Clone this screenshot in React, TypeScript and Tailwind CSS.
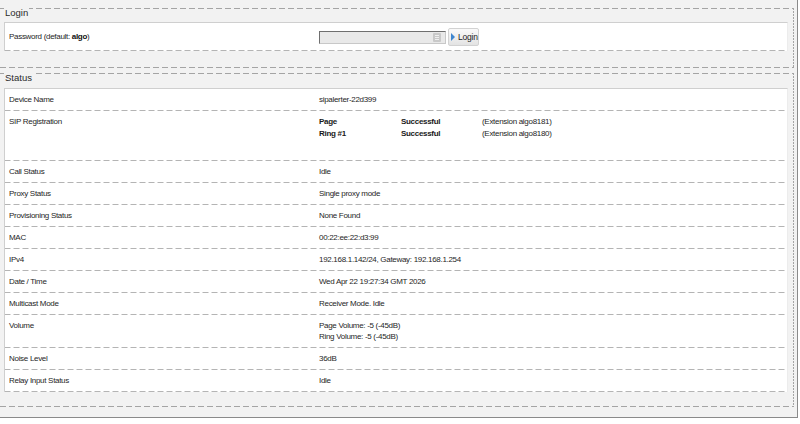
import React from 'react';

type Row = { label: string; value: React.ReactNode };

const font = "font-['Liberation_Sans',Arial,sans-serif]";

// dashed rule drawn as a repeating gradient (6px dash, 3px gap)
const rowRule =
  'bg-[linear-gradient(to_right,#b4b4b4_6px,transparent_6px)] bg-[length:9px_1px] bg-repeat-x bg-bottom';

// top, bottom and right dashed edges of a group box
const groupEdges =
  '[background:linear-gradient(to_right,#a4a4a4_6px,transparent_6px)_0_0/9px_1px_repeat-x,linear-gradient(to_right,#a4a4a4_6px,transparent_6px)_0_100%/9px_1px_repeat-x,linear-gradient(to_bottom,#a4a4a4_2px,transparent_2px)_100%_0/1px_3px_repeat-y]';

// SIP account table shown inside the status row
const SipRegistration = () => {
  const accounts = [
    { name: 'Page', state: 'Successful', ext: '(Extension algo8181)' },
    { name: 'Ring #1', state: 'Successful', ext: '(Extension algo8180)' },
  ];
  return (
    <div className="min-h-[39px]">
      {accounts.map((a) => (
        <div key={a.name} className="flex leading-[12px]">
          <span className="w-[82px] font-bold text-[#1a1a1a]">{a.name}</span>
          <span className="w-[81px] font-bold text-[#1a1a1a]">{a.state}</span>
          <span>{a.ext}</span>
        </div>
      ))}
    </div>
  );
};

const rows: Row[] = [
  { label: 'Device Name', value: 'sipalerter-22d399' },
  { label: 'SIP Registration', value: <SipRegistration /> },
  { label: 'Call Status', value: 'Idle' },
  { label: 'Proxy Status', value: 'Single proxy mode' },
  { label: 'Provisioning Status', value: 'None Found' },
  { label: 'MAC', value: '00:22:ee:22:d3:99' },
  { label: 'IPv4', value: '192.168.1.142/24, Gateway: 192.168.1.254' },
  { label: 'Date / Time', value: 'Wed Apr 22 19:27:34 GMT 2026' },
  { label: 'Multicast Mode', value: 'Receiver Mode. Idle' },
  {
    label: 'Volume',
    value: (
      <>
        <div>Page Volume: -5 (-45dB)</div>
        <div>Ring Volume: -5 (-45dB)</div>
      </>
    ),
  },
  { label: 'Noise Level', value: '36dB' },
  { label: 'Relay Input Status', value: 'Idle' },
];

const Section = ({
  title,
  className,
  boxClass,
  children,
}: {
  title: string;
  className?: string;
  boxClass?: string;
  children: React.ReactNode;
}) => (
  <div className={`mr-[3px] pr-[6px] ${groupEdges} ${className ?? ''}`}>
    <div className="-mt-[5px] flex h-[10px] pl-1">
      <span className="bg-[#f2f2f2] px-px text-[9.5px] leading-[10px] tracking-normal text-[#2b2b2b]">{title}</span>
    </div>
    <div className={`ml-1 border border-b-0 border-[#cfcfcf] border-r-[#ececec] bg-white ${boxClass ?? ''}`}>
      {children}
    </div>
  </div>
);

const KeyIcon = () => (
  <svg width="8" height="9" viewBox="0 0 8 9" className="absolute right-[4px] top-[1px]">
    <rect x="0" y="0" width="8" height="9" rx="1" fill="#c9c9c9" />
    <rect x="2" y="2" width="4" height="1" fill="#efefef" />
    <rect x="2" y="4" width="4" height="1" fill="#efefef" />
    <rect x="2" y="6" width="4" height="1" fill="#efefef" />
  </svg>
);

export default function App() {
  return (
    <div className={`h-[424px] w-[800px] bg-white ${font} text-[8px] tracking-[-0.3px] text-[#262626]`}>
      <div className="h-[418px] w-[798px] border-r border-b border-[#8a8a8a] bg-[#f2f2f2] pt-[13px]">
        {/* Login */}
        <Section title="Login" className="pb-[17px]" boxClass="mt-[4px]">
          <div className={`flex h-[28px] items-center ${rowRule}`}>
            <div className="w-[310px] pl-1">
              Password (default: <b className="text-[#111]">algo</b>)
            </div>
            <div className="flex items-center gap-[2px] pl-1">
              <div className="relative h-[13px] w-[127px] border border-t-[#6f6f6f] border-l-[#6f6f6f] border-r-[#c8c8c8] border-b-[#c8c8c8] bg-[#e9e9e9]">
                <KeyIcon />
              </div>
              <button className="flex h-[18px] w-[31px] items-center gap-[3px] rounded-[2px] border border-[#d2d2d2] bg-gradient-to-b from-[#fafafa] to-[#e3e3e3] pl-[2px] text-[8.5px] tracking-[-0.2px] text-[#222]">
                <svg width="4" height="8" viewBox="0 0 4 8">
                  <path d="M0 0 L4 4 L0 8 Z" fill="#3f86cf" />
                </svg>
                Login
              </button>
            </div>
          </div>
        </Section>

        {/* Status */}
        <Section title="Status" className="mt-[10px] pb-[15px]" boxClass="mt-[5px]">
          {rows.map((r) => (
            <div key={r.label} className={`flex pt-[5px] pb-[6px] leading-[11px] ${rowRule}`}>
              <div className="w-[310px] pl-1">{r.label}</div>
              <div className="flex-1 pl-1">{r.value}</div>
            </div>
          ))}
        </Section>
      </div>
    </div>
  );
}
